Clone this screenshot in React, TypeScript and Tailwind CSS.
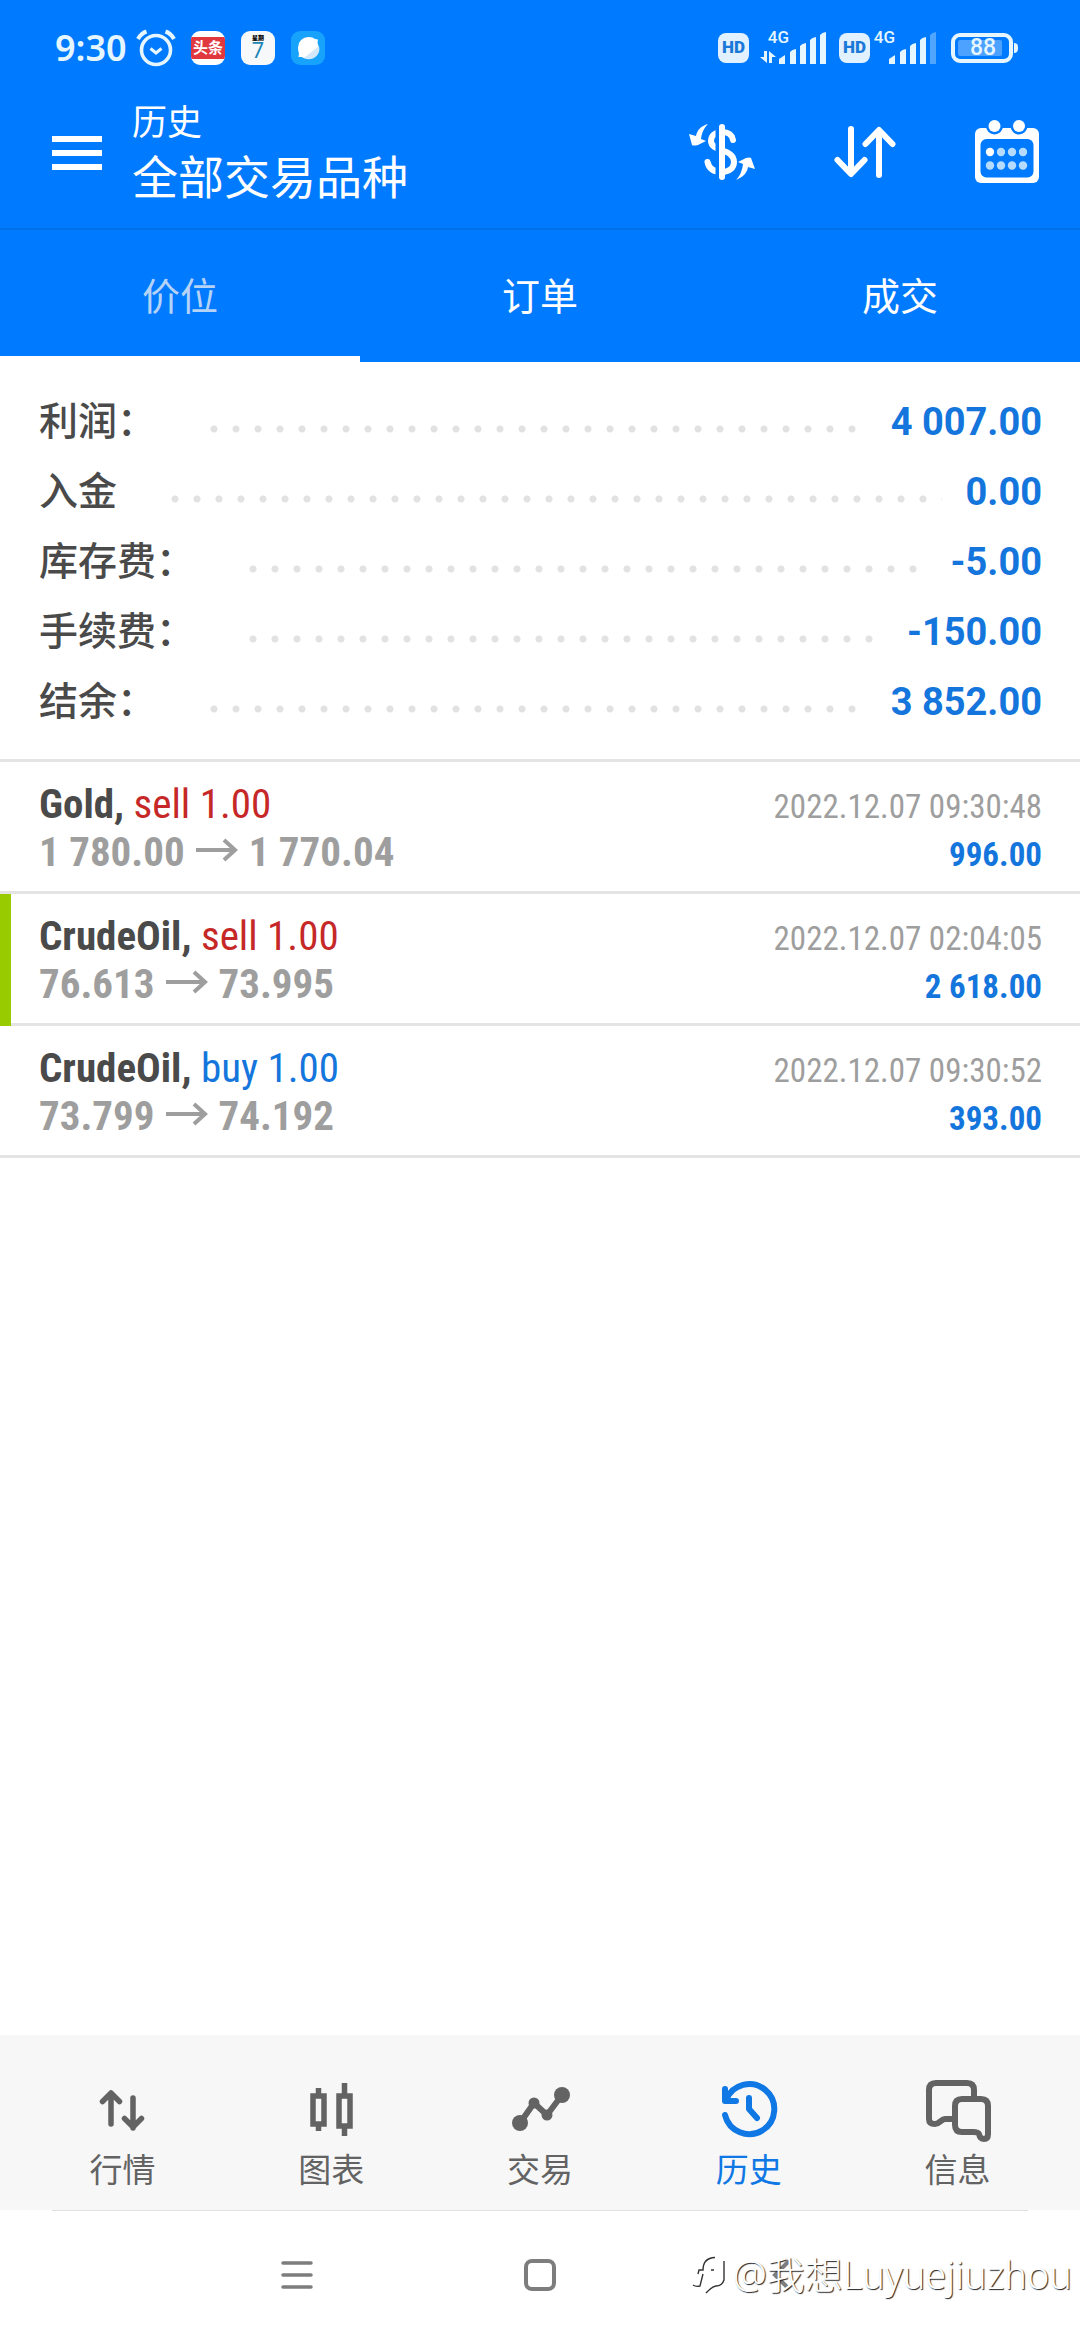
import { useState, type ReactNode } from "react";
import clsx from "clsx";

type Deal = {
  id: number;
  symbol: string;
  side: "buy" | "sell";
  volume: string;
  open: string;
  close: string;
  time: string;
  profit: string;
  marked?: boolean;
};

const TABS = ["价位", "订单", "成交"];

const SUMMARY = [
  { label: "利润：", value: "4 007.00" },
  { label: "入金", value: "0.00" },
  { label: "库存费：", value: "-5.00" },
  { label: "手续费：", value: "-150.00" },
  { label: "结余：", value: "3 852.00" },
];

const DEALS: Deal[] = [
  {
    id: 1,
    symbol: "Gold",
    side: "sell",
    volume: "1.00",
    open: "1 780.00",
    close: "1 770.04",
    time: "2022.12.07 09:30:48",
    profit: "996.00",
  },
  {
    id: 2,
    symbol: "CrudeOil",
    side: "sell",
    volume: "1.00",
    open: "76.613",
    close: "73.995",
    time: "2022.12.07 02:04:05",
    profit: "2 618.00",
    marked: true,
  },
  {
    id: 3,
    symbol: "CrudeOil",
    side: "buy",
    volume: "1.00",
    open: "73.799",
    close: "74.192",
    time: "2022.12.07 09:30:52",
    profit: "393.00",
  },
];

function AlarmIcon() {
  return (
    <svg width="40" height="38" viewBox="0 0 40 38" fill="none" stroke="currentColor" aria-hidden>
      <circle cx="20" cy="21" r="14.500" strokeWidth="3.600" />
      <path d="M2 10 Q5 4.500 10.500 2.500M38 10 Q35 4.500 29.500 2.500" strokeWidth="4" />
      <path d="M14.500 19.500 L20 24 L25.500 19.500" strokeWidth="3" />
    </svg>
  );
}

function HdBadge() {
  return (
    <span className="flex h-[30px] w-[31px] items-center justify-center rounded-lg bg-[#e2f1ff] text-[17px] font-black text-[#1a78d8]">
      HD
    </span>
  );
}

function SignalBars({ weak = false }: { weak?: boolean }) {
  return (
    <svg width="48" height="32" viewBox="0 0 48 32" fill="currentColor" aria-hidden>
      <path d="M0 32V27L6 23V32Z" />
      <path d="M11 32V20Q13 17.500 17 17V32Z" />
      <path d="M21 32V14Q23 11.500 27 11V32Z" />
      <path d="M31 32V8Q33 5.500 37 5V32Z" />
      <path d="M41 32V3Q43 .5 47 0V32Z" opacity={weak ? 0.35 : 1} />
    </svg>
  );
}

function StatusBar() {
  return (
    <div className="flex h-24 items-center justify-between pr-[62px] pl-[55px] text-[#e6f6ff]">
      <div className="flex items-center">
        <span className="w-[81px] font-['Noto_Sans',sans-serif] text-4xl font-semibold">9:30</span>
        <AlarmIcon />
        <span className="ml-[15px] flex h-[34px] w-[34px] flex-col justify-center overflow-hidden rounded-[9px] bg-white">
          <span className="bg-[#e0383e] text-center text-[15px] leading-[22px] font-bold text-white">
            头条
          </span>
        </span>
        <span className="ml-4 flex h-[34px] w-[34px] flex-col items-center rounded-[9px] bg-[#f6f8fa] pt-[3px]">
          <span className="text-[6px] leading-[7px] font-black text-black">星期</span>
          <span className="text-[22px] leading-5 text-[#1d86b4]">7</span>
        </span>
        <svg className="ml-4" width="34" height="34" viewBox="0 0 34 34" aria-hidden>
          <rect width="34" height="34" rx="9" fill="#17a3fb" />
          <path d="M7 17A10.500 10.500 0 0 1 18 6Q22 6 24 8L27 8.500L26.500 12A10.500 10.500 0 0 1 17 27.500Q13 27.500 10.500 26L7.500 26L8 22.500Q7 20 7 17Z" fill="#fff" />
          <path d="M28 15A10.500 10.500 0 0 1 13 27Z" fill="#d3e9fb" />
        </svg>
      </div>
      <div className="flex items-center">
        <HdBadge />
        <span className="relative ml-[30px] flex">
          <span className="absolute right-[38px] -top-[3px] text-[17px] leading-4 font-medium">4G</span>
          <svg className="absolute top-[19px] right-[51px]" width="16" height="12" viewBox="0 0 16 12" fill="currentColor" aria-hidden>
            <path d="M4 0H7V12L0 6H4Z" />
            <path d="M9 12H12V6H16L9 0Z" />
          </svg>
          <SignalBars />
        </span>
        <span className="ml-3 flex">
          <HdBadge />
        </span>
        <span className="relative ml-[19px] flex">
          <span className="absolute right-[38px] -top-[3px] pr-1 text-[17px] leading-4 font-medium">4G</span>
          <SignalBars weak />
        </span>
        <span className="ml-[14px] flex h-[30px] w-[62px] items-center rounded-[9px] border-4 border-current px-[3px]">
          <span className="h-4 w-11 rounded-xs bg-white/30 pl-3 text-[23px] leading-4 font-medium">
            88
          </span>
        </span>
        <span className="ml-px h-[10px] w-1 rounded-r-sm bg-current" />
      </div>
    </div>
  );
}

function ExchangeIcon() {
  return (
    <svg width="66" height="58" viewBox="0 0 66 58" fill="none" aria-hidden>
      <path
        d="M44 17C43 11 38 9 33 9C26 9 22 13 22 18C22 29 45 25 45 39C45 45 40 49 33 49C25 49 20 46 18.500 39"
        stroke="currentColor"
        strokeWidth="6"
        strokeLinecap="round"
      />
      <path d="M28.500 4V54" stroke="#007aff" strokeWidth="4" />
      <path d="M33 4V54" stroke="currentColor" strokeWidth="6" strokeLinecap="round" />
      <path d="M19 1C12 3 8 7 7 13L0 11L3 22Q4 23 9 22L17 18L12 16C13 9 15 5 19 1Z" fill="currentColor" />
      <path d="M47 57C54 54 58 50 59 44L66 46L62 35Q61 34 57 35L49 39L54 41C53 48 51 53 47 57Z" fill="currentColor" />
    </svg>
  );
}

function SortIcon() {
  return (
    <svg width="62" height="54" viewBox="0 0 62 54" fill="none" stroke="currentColor" strokeWidth="6" strokeLinecap="round" strokeLinejoin="round" aria-hidden>
      <path d="M17 4V48M3.500 35L17 49L30.500 35" />
      <path d="M45 50V6M31.500 19L45 5L58.500 19" />
    </svg>
  );
}

function CalendarIcon() {
  return (
    <svg width="64" height="64" viewBox="0 0 64 64" aria-hidden>
      <rect y="8" width="64" height="55" rx="6" fill="currentColor" />
      <rect x="5.500" y="19" width="53" height="38.500" rx="6" fill="#007aff" />
      <circle cx="19.500" cy="6" r="8.500" fill="#007aff" />
      <circle cx="44" cy="6" r="8.500" fill="#007aff" />
      <circle cx="19.500" cy="6" r="6" fill="currentColor" />
      <circle cx="44" cy="6" r="6" fill="currentColor" />
      {[15, 26, 37, 48].map((x) => (
        <g key={x} fill={x === 15 ? "#fff" : "#b5dcff"}>
          <circle cx={x} cy="32" r="4.200" />
          <circle cx={x} cy="45.500" r="4.200" fill="#b5dcff" />
        </g>
      ))}
    </svg>
  );
}

function Header() {
  return (
    <div className="flex h-[134px] items-start border-b-2 border-[#0070e8] pr-[41px] pl-[52px] text-white">
      <button type="button" aria-label="菜单" className="mt-10 flex w-[50px] flex-col gap-2">
        <span className="h-[6px] bg-white" />
        <span className="h-[6px] bg-white" />
        <span className="h-[6px] bg-white" />
      </button>
      <h1 className="ml-[30px] flex-1 pt-[2px] text-[46px] leading-[56px]">
        <span className="block text-[35px] leading-[52px]">历史</span>
        全部交易品种
      </h1>
      <div className="mt-6 flex items-center gap-[79px]">
        <button type="button" aria-label="货币">
          <ExchangeIcon />
        </button>
        <button type="button" aria-label="排序">
          <SortIcon />
        </button>
        <button type="button" aria-label="日期">
          <CalendarIcon />
        </button>
      </div>
    </div>
  );
}

function DealRow({ deal }: { deal: Deal }) {
  return (
    <li
      className={clsx(
        "relative border-b-[3px] border-[#e4e4e4] pt-[18px] pr-[38px] pb-[15px] pl-[39px] font-['Roboto_Condensed',Roboto,sans-serif] leading-[48px]",
        deal.marked &&
          "before:absolute before:top-0 before:-bottom-[3px] before:left-0 before:w-[11px] before:bg-[#99cc00]",
      )}
    >
      <div className="flex h-12 items-baseline justify-between">
        <span className="text-[41px] font-bold text-[#4a4a4a]">
          {deal.symbol},{" "}
          <span className={clsx("font-normal", deal.side === "sell" ? "text-[#c62828]" : "text-[#1476dc]")}>
            {deal.side} {deal.volume}
          </span>
        </span>
        <time className="text-[33px] text-[#9e9e9e]">{deal.time}</time>
      </div>
      <div className="flex h-12 items-baseline justify-between">
        <span className="flex items-baseline gap-[11px] text-[41px] font-bold text-[#9e9e9e]">
          {deal.open}
          <svg width="42" height="28" viewBox="0 0 42 28" fill="none" stroke="currentColor" strokeWidth="4" aria-hidden>
            <path d="M0 12H39M28 2L39 12L28 22" />
          </svg>
          {deal.close}
        </span>
        <span className="text-[33px] font-bold text-[#1476dc]">{deal.profit}</span>
      </div>
    </li>
  );
}

const NAV: { label: string; icon: ReactNode }[] = [
  {
    label: "行情",
    icon: (
      <g strokeLinecap="round" strokeLinejoin="round" strokeWidth="5.500">
        <path d="M24 47V17M15.500 24.500L24 16L32.500 24.500" />
        <path d="M46 21V51M37.500 41.500L46 50L54.500 41.500" />
      </g>
    ),
  },
  {
    label: "图表",
    icon: (
      <g strokeWidth="5.500">
        <path d="M22.500 11V17M22.500 48V54M48.500 6V17M48.500 50V59" />
        <rect x="17" y="19" width="11" height="28" />
        <rect x="43" y="19" width="11" height="30" />
      </g>
    ),
  },
  {
    label: "交易",
    icon: (
      <g strokeWidth="6" strokeLinejoin="round">
        <path d="M15 46L29 26L42 38L57 18" />
        <g fill="currentColor" stroke="none">
          <circle cx="15" cy="46" r="8" />
          <circle cx="57" cy="18" r="8" />
          <circle cx="29" cy="26" r="5.500" />
          <circle cx="42" cy="38" r="5.500" />
        </g>
      </g>
    ),
  },
  {
    label: "历史",
    icon: (
      <g strokeWidth="6" strokeLinecap="round" strokeLinejoin="round">
        <path d="M11 38A25 25 0 1 0 12 23" />
        <path d="M11 12V24H22" />
        <path d="M35 21V32L43 41" />
      </g>
    ),
  },
  {
    label: "信息",
    icon: (
      <g strokeWidth="6" strokeLinejoin="round">
        <path d="M32 42H22C18 42 17 47 12 47Q6 47 6 42V13Q6 6 13 6H44Q51 6 51 13V22" />
        <path d="M39 22H58Q65 22 65 29V57Q65 62 61 62Q57 62 56 57Q55 55 50 55H39Q32 55 32 48V29Q32 22 39 22Z" />
      </g>
    ),
  },
];

export default function App() {
  const [tab, setTab] = useState("价位");
  const [section, setSection] = useState("历史");

  return (
    <div className="flex min-h-screen flex-col bg-white font-[Roboto,'Noto_Sans_CJK_SC',sans-serif]">
      <header className="bg-[#007aff]">
        <StatusBar />
        <Header />
        <div role="tablist" className="flex">
          {TABS.map((name) => (
            <button
              key={name}
              type="button"
              role="tab"
              aria-selected={tab === name}
              onClick={() => setTab(name)}
              className={clsx(
                "h-[132px] flex-1 border-b-[6px] pt-2 text-[38px]",
                tab === name ? "border-b-white text-[#b5d2f7]" : "border-b-transparent text-white",
              )}
            >
              {name}
            </button>
          ))}
        </div>
      </header>

      <main className="flex-1">
        <dl className="border-b-[3px] border-[#e4e4e4] pt-[25px] pr-[38px] pb-[22px] pl-[39px]">
          {SUMMARY.map((row) => (
            <div key={row.label} className="flex h-[70px] items-center">
              <dt className="text-[39px] font-medium text-[#4a4a4a]">{row.label}</dt>
              <span className="mt-[14px] mr-6 ml-[47px] h-[22px] flex-1 bg-[radial-gradient(circle,#e2e2e2_3px,transparent_4px)] bg-[length:22px_22px]" />
              <dd className="text-[38px] font-bold text-[#1476dc]">{row.value}</dd>
            </div>
          ))}
        </dl>
        <ul>
          {DEALS.map((deal) => (
            <DealRow key={deal.id} deal={deal} />
          ))}
        </ul>
      </main>

      <nav className="flex h-[175px] bg-[#f7f7f7] px-[18px]">
        {NAV.map((item) => (
          <button
            key={item.label}
            type="button"
            onClick={() => setSection(item.label)}
            className={clsx(
              "flex flex-1 flex-col items-center pt-[42px] text-[33px] leading-[48px]",
              section === item.label ? "text-[#1078e4]" : "text-[#636363]",
            )}
          >
            <svg width="70" height="70" viewBox="0 0 70 70" fill="none" stroke="currentColor" aria-hidden>
              {item.icon}
            </svg>
            {item.label}
          </button>
        ))}
      </nav>

      <footer className="relative px-[52px] pb-[2px]">
        <div className="flex h-32 items-center justify-center gap-[211px] border-t border-[#e0e0e0] text-[#7d7d7d]">
          <button type="button" aria-label="最近任务">
            <svg width="32" height="32" viewBox="0 0 32 32" stroke="currentColor" strokeWidth="3.500" strokeLinecap="round" aria-hidden>
              <path d="M2 4H30M2 16H30M2 28H30" />
            </svg>
          </button>
          <button type="button" aria-label="主屏幕">
            <svg width="32" height="32" viewBox="0 0 32 32" fill="none" stroke="currentColor" strokeWidth="4" aria-hidden>
              <rect x="2" y="2" width="28" height="28" rx="6" />
            </svg>
          </button>
          <button type="button" aria-label="返回">
            <svg width="32" height="32" viewBox="0 0 32 32" fill="none" stroke="currentColor" strokeWidth="4" aria-hidden>
              <path d="M22 2L8 16L22 30" />
            </svg>
          </button>
        </div>
        <div className="absolute right-2 bottom-[38px] flex items-center gap-[6px] font-['Noto_Sans','Noto_Sans_CJK_SC',sans-serif] text-[38px] leading-[56px] font-light text-white [text-shadow:1px_1px_1px_#222]">
          <svg width="36" height="42" viewBox="0 0 36 42" fill="none" stroke="#333" strokeWidth="1.400" aria-hidden>
            <path d="M7 21L8 17H12Q12 5 24 4.500M33 8V27Q31 33 25 33Q20 34 15 40M20 17H23M12 21L9 33Q5 34 2 32" />
          </svg>
          @我想Luyuejiuzhou
        </div>
      </footer>
    </div>
  );
}
